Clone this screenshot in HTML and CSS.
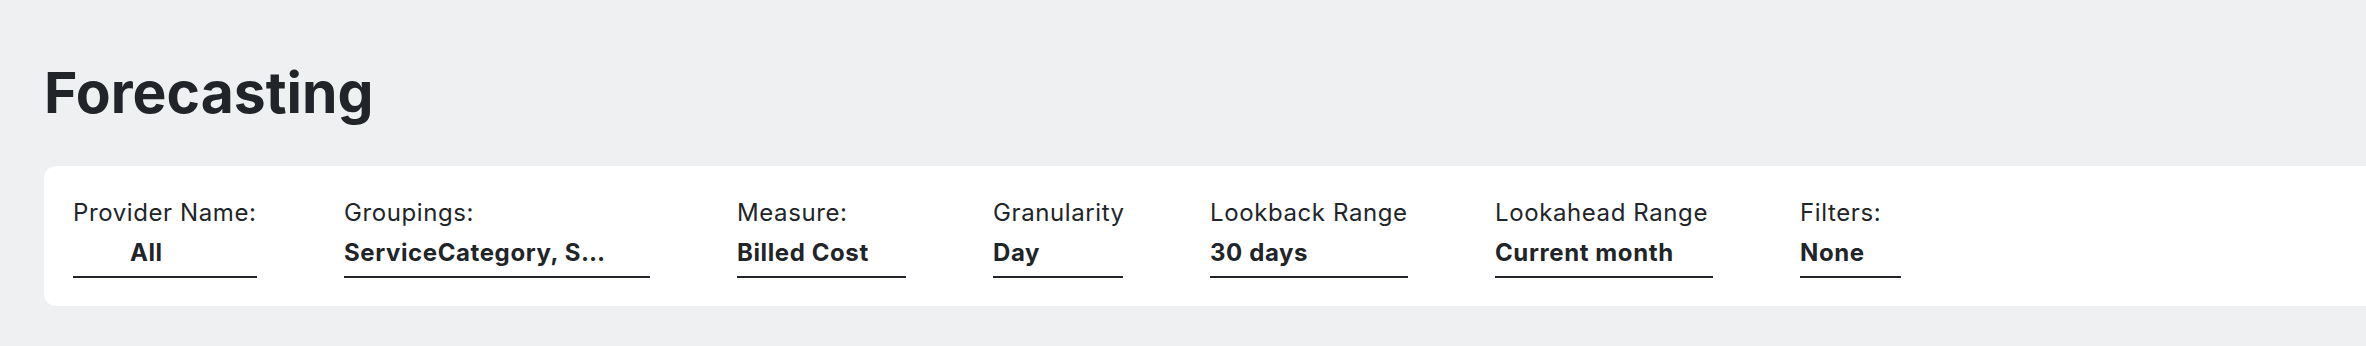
FILE: index.html
```html
<!DOCTYPE html>
<html lang="en">
<head>
    <meta charset="UTF-8">
    <meta name="viewport" content="width=device-width, initial-scale=1.0">
    <title>Forecasting</title>
    <link rel="stylesheet" href="styles.css">
</head>
<body>
    <main class="page">
        <h1 class="page-title">Forecasting</h1>

        <div class="toolbar">
            <div class="field field-provider">
                <span class="field-label">Provider Name:</span>
                <div class="field-value">All</div>
            </div>
            <div class="field field-groupings">
                <span class="field-label">Groupings:</span>
                <div class="field-value">ServiceCategory, S…</div>
            </div>
            <div class="field field-measure">
                <span class="field-label">Measure:</span>
                <div class="field-value">Billed Cost</div>
            </div>
            <div class="field field-granularity">
                <span class="field-label">Granularity</span>
                <div class="field-value">Day</div>
            </div>
            <div class="field field-lookback">
                <span class="field-label">Lookback Range</span>
                <div class="field-value">30 days</div>
            </div>
            <div class="field field-lookahead">
                <span class="field-label">Lookahead Range</span>
                <div class="field-value">Current month</div>
            </div>
            <div class="field field-filters">
                <span class="field-label">Filters:</span>
                <div class="field-value">None</div>
            </div>
        </div>
    </main>
</body>
</html>
```

FILE: styles.css
```css
html, body {
    margin: 0;
    padding: 0;
    background-color: #eff0f2;
    overflow: hidden;
}
body {
    font-family: Inter, "Noto Sans", sans-serif;
    color: #212529;
}
.page {
    padding: 57px 0 0 44px;
}
.page-title {
    margin: 0 0 37px 0;
    font-size: 57px;
    line-height: 72px;
    font-weight: 700;
    letter-spacing: 0;
}
.toolbar {
    display: flex;
    gap: 87px;
    width: 2400px;
    padding: 29px 29px 28px 29px;
    background-color: #fff;
    border-radius: 12px;
}
.field {
    display: flex;
    flex-direction: column;
    gap: 4px;
}
.field-label {
    font-size: 24px;
    line-height: 36px;
    letter-spacing: 0.6px;
    white-space: nowrap;
}
.field-value {
    font-size: 24px;
    line-height: 36px;
    font-weight: 700;
    letter-spacing: 0.6px;
    padding-bottom: 5px;
    border-bottom: 2px solid #212529;
    white-space: nowrap;
}
.field-provider { width: 184px; }
.field-provider .field-value { padding-left: 57px; }
.field-groupings { width: 306px; }
.field-measure { width: 169px; }
.field-granularity { width: 130px; }
.field-lookback { width: 198px; }
.field-lookahead { width: 218px; }
.field-filters { width: 101px; }
```
